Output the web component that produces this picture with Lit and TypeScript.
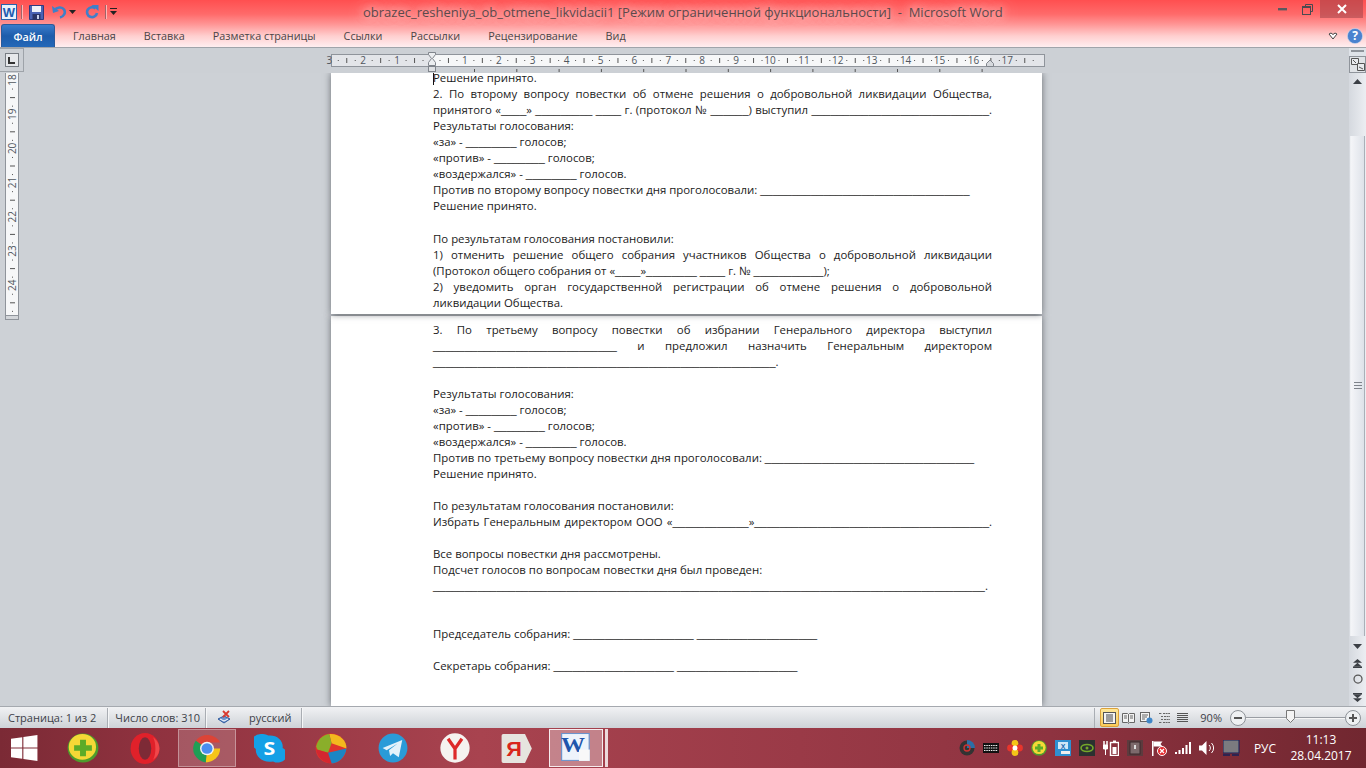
import { LitElement, html, css, svg } from "lit";
import { customElement } from "lit/decorators.js";

const u = (n: number) => "_".repeat(n);
type L = { t: string; j?: boolean };
const page1: L[] = [
  { t: "Решение принято." },
  { t: "2. По второму вопросу повестки об отмене решения о добровольной ликвидации Общества,", j: true },
  { t: `принятого «${u(4)}» ${u(9)} ${u(4)} г. (протокол № ${u(6)}) выступил ${u(28)}.`, j: true },
  { t: "Результаты голосования:" },
  { t: `«за» - ${u(8)} голосов;` },
  { t: `«против» - ${u(8)} голосов;` },
  { t: `«воздержался» - ${u(8)} голосов.` },
  { t: `Против по второму вопросу повестки дня проголосовали: ${u(33)}` },
  { t: "Решение принято." },
  { t: "" },
  { t: "По результатам голосования постановили:" },
  { t: "1) отменить решение общего собрания участников Общества о добровольной ликвидации", j: true },
  { t: `(Протокол общего собрания от «${u(4)}»${u(8)} ${u(4)} г. № ${u(11)});` },
  { t: "2) уведомить орган государственной регистрации об отмене решения о добровольной", j: true },
  { t: "ликвидации Общества." },
];
const page2: L[] = [
  { t: "3. По третьему вопросу повестки об избрании Генерального директора выступил", j: true },
  { t: `${u(29)} и предложил назначить Генеральным директором`, j: true },
  { t: `${u(54)}.` },
  { t: "" },
  { t: "Результаты голосования:" },
  { t: `«за» - ${u(8)} голосов;` },
  { t: `«против» - ${u(8)} голосов;` },
  { t: `«воздержался» - ${u(8)} голосов.` },
  { t: `Против по третьему вопросу повестки дня проголосовали: ${u(33)}` },
  { t: "Решение принято." },
  { t: "" },
  { t: "По результатам голосования постановили:" },
  { t: `Избрать Генеральным директором ООО «${u(12)}»${u(37)}.`, j: true },
  { t: "" },
  { t: "Все вопросы повестки дня рассмотрены." },
  { t: "Подсчет голосов по вопросам повестки дня был проведен:" },
  { t: `${u(87)}.` },
  { t: "" },
  { t: "" },
  { t: `Председатель собрания: ${u(19)} ${u(19)}` },
  { t: "" },
  { t: `Секретарь собрания: ${u(19)} ${u(19)}` },
];

const hRuler = () => {
  const nums: number[] = [];
  for (let k = -3; k <= 17; k++) if (k !== 0) nums.push(k);
  const X = (k: number) => 102 + 33.9 * k;
  const marks: unknown[] = [];
  for (let k = -3; k <= 17; k++) {
    marks.push(svg`<rect x="${X(k + 0.25)}" y="60" width="1" height="1" fill="#555"/>`);
    marks.push(svg`<rect x="${X(k + 0.5)}" y="58" width="1" height="5" fill="#555"/>`);
    marks.push(svg`<rect x="${X(k + 0.75)}" y="60" width="1" height="1" fill="#555"/>`);
  }
  const tabs: number[] = [];
  for (let i = 0; i <= 12; i++) tabs.push(145 + 42.3 * i);
  return html`<svg class="hruler" width="718" height="25" viewBox="0 48 718 25">
    <rect x="2.5" y="54.5" width="713" height="12" fill="#e3e5e9" stroke="#8f949b"/>
    <rect x="104" y="55" width="557" height="11" fill="#f6f7f8"/>
    <g>${marks.filter((_, i) => {
      const k = -3 + Math.floor(i / 3);
      return X(k) + 33.9 < 715 && X(k) > -10;
    })}</g>
    ${nums.map((k) => svg`<text x="${X(k)}" y="64" text-anchor="middle" class="rn">${Math.abs(k)}</text>`)}
    ${tabs.map((x) => svg`<rect x="${x}" y="69" width="1" height="3" fill="#555"/>`)}
    <path d="M99.5 52.5h7v2l-3 4 3 4v3h-7v-3l3-4-3-4z" fill="#eceef0" stroke="#80858c"/>
    <rect x="99.5" y="66.5" width="7" height="5" fill="#dfe1e4" stroke="#80858c"/>
    <path d="M657.5 66.5v-3l3.5-3.5 3.5 3.5v3z" fill="#d6d9dd" stroke="#80858c"/>
  </svg>`;
};

const vRuler = () => {
  const marks: unknown[] = [];
  const nums = [18, 19, 20, 21, 22, 23, 24];
  const Y = (n: number) => 7 + 34.2 * (n - 18);
  for (let n = 17; n <= 24; n++) {
    for (const [f, w] of [[0.25, 1], [0.5, 5], [0.75, 1]] as const) {
      const y = Y(n) + 34.2 * f;
      if (y > 0 && y < 243) marks.push(svg`<rect x="${7 - (w - 1) / 2}" y="${y}" width="${w}" height="1" fill="#555"/>`);
    }
  }
  return html`<svg class="vruler" width="14" height="247" viewBox="0 0 14 247">
    <rect x="0.5" y="-2" width="13" height="245" fill="#f6f7f8" stroke="#8f949b"/>
    <rect x="0.5" y="242.5" width="13" height="4" fill="#d3d6da" stroke="#8f949b"/>
    ${marks}
    ${nums.map((n) => svg`<text transform="translate(10.5 ${Y(n)}) rotate(-90)" text-anchor="middle" class="rn">${n}</text>`)}
  </svg>`;
};

const I = {
  wordSmall: html`<svg width="16" height="16" viewBox="0 0 16 16"><rect x=".5" y=".5" width="15" height="15" fill="#e9f1fb" stroke="#2a62ac"/><text x="8" y="13" text-anchor="middle" class="wt" font-size="13">W</text></svg>`,
  save: html`<svg width="15" height="15" viewBox="0 0 15 15"><path d="M.5.5h14v14H.5z" fill="#4a63b4" stroke="#2c3a80"/><rect x="3" y="1" width="9" height="6" fill="#eef1f8"/><rect x="3.5" y="9" width="8" height="6" fill="#2b3566"/><rect x="8" y="10" width="2" height="4" fill="#c7d0ea"/></svg>`,
  undo: html`<svg width="15" height="14" viewBox="0 0 15 14"><path d="M2 5.500c3-3.500 8-4 10-1 2 3 0 7-4 8" fill="none" stroke="#3f80c8" stroke-width="2.600"/><path d="M0 1l1 7 6-2z" fill="#3f80c8"/></svg>`,
  redo: html`<svg width="14" height="14" viewBox="0 0 14 14"><path d="M10.500 3.500a5 5 0 1 0 1.500 4.500" fill="none" stroke="#3f7fc9" stroke-width="2.600"/><path d="M6.500 0h7v6z" fill="#3f7fc9"/></svg>`,
  down: html`<svg width="7" height="4" viewBox="0 0 7 4"><path d="M0 0h7L3.500 4z" fill="#222"/></svg>`,
  qat: html`<svg width="8" height="8" viewBox="0 0 8 8"><path d="M0 0h7v1H0z" fill="#222"/><path d="M0 3h7L3.500 7z" fill="#222"/></svg>`,
  min: html`<svg width="9" height="4" viewBox="0 0 9 4"><rect width="9" height="2.400" y="1" fill="#5a5a5f"/></svg>`,
  rest: html`<svg width="11" height="11" viewBox="0 0 11 11"><path d="M3.500 2.500v-2h7v7h-2" fill="none" stroke="#4a4a50"/><rect x=".5" y="2.500" width="8" height="8" fill="none" stroke="#4a4a50"/><rect x=".5" y="2.500" width="8" height="1.500" fill="#4a4a50"/></svg>`,
  close: html`<svg width="10" height="10" viewBox="0 0 10 10"><path d="M1 1l8 8M9 1l-8 8" stroke="#fff" stroke-width="2"/></svg>`,
  fold: html`<svg width="10" height="8" viewBox="0 0 10 8"><path d="M1 2l2-1 2 1.500L7 1l2 1-4 5z" fill="#fff" stroke="#444" stroke-width="1"/></svg>`,
  help: html`<svg width="16" height="16" viewBox="0 0 16 16"><circle cx="8" cy="8" r="7.600" fill="#4a82cf" stroke="#cfdcf0" stroke-width=".6"/><text x="8" y="12.400" text-anchor="middle" class="hq">?</text></svg>`,
  tabstop: html`<svg width="7" height="7" viewBox="0 0 7 7"><path d="M0 0h2v5h5v2H0z" fill="#333"/></svg>`,
  viewRuler: html`<svg width="14" height="13" viewBox="0 0 14 13"><path d="M.5.5h7v6h-7z" fill="#e8eaee" stroke="#555"/><path d="M6.500 5.500h7v7h-7z" fill="#e8eaee" stroke="#555"/><path d="M2 2l3 3M8 9l4 2" stroke="#555"/></svg>`,
  up: html`<svg width="9" height="5" viewBox="0 0 9 5"><path d="M0 5h9L4.500 0z" fill="#3b3f45"/></svg>`,
  dn: html`<svg width="9" height="5" viewBox="0 0 9 5"><path d="M0 0h9L4.500 5z" fill="#3b3f45"/></svg>`,
  prev: html`<svg width="9" height="9" viewBox="0 0 7 7"><path d="M3.500 0L7 3H0zM3.500 3L7 6H0z" fill="#3b3f45"/><rect y="6" width="7" height="1" fill="#3b3f45"/></svg>`,
  next: html`<svg width="9" height="9" viewBox="0 0 7 7"><rect width="7" height="1" fill="#3b3f45"/><path d="M0 1h7L3.500 4zM0 4h7L3.500 7z" fill="#3b3f45"/></svg>`,
  browse: html`<svg width="10" height="10" viewBox="0 0 8 8"><circle cx="4" cy="4" r="3.200" fill="none" stroke="#555"/></svg>`,
  spell: html`<svg width="15" height="15" viewBox="0 0 15 15"><path d="M1 9l6-3 6 3-6 4z" fill="#6f93cc" stroke="#2e5a9e"/><path d="M3 9l4 2 4-2" fill="none" stroke="#fff"/><path d="M6 1l6 6M12 1l-6 6" stroke="#d83a30" stroke-width="1.800"/></svg>`,
  vPrint: html`<svg width="13" height="12" viewBox="0 0 13 12"><rect x=".5" y=".5" width="12" height="11" fill="#f4f4f4" stroke="#555"/><path d="M3 3h7M3 5h7M3 7h7M3 9h7" stroke="#444"/></svg>`,
  vRead: html`<svg width="13" height="12" viewBox="0 0 13 12"><path d="M.5 1.500h5l1 1 1-1h5v9h-5l-1 1-1-1h-5z" fill="#f2f2f2" stroke="#666"/><path d="M6.500 2.500v8M2 4h3M2 6h3M8 4h3M8 6h3" stroke="#666"/></svg>`,
  vWeb: html`<svg width="13" height="12" viewBox="0 0 13 12"><rect x=".5" y=".5" width="9" height="9" fill="#f4f4f4" stroke="#666"/><path d="M2 3h6M2 5h5M2 7h3" stroke="#666"/><circle cx="9.500" cy="8.500" r="3" fill="#3f86c8"/></svg>`,
  vOut: html`<svg width="13" height="12" viewBox="0 0 13 12"><path d="M1 1.500h3M5 1.500h7M3 4.500h2M6 4.500h6M3 7.500h2M6 7.500h6M1 10.500h3M5 10.500h7" stroke="#666" stroke-dasharray="2 .6"/></svg>`,
  vDraft: html`<svg width="13" height="12" viewBox="0 0 13 12"><path d="M1 1.500h11M1 3.500h11M1 5.500h11M1 7.500h11M1 9.500h11" stroke="#555"/></svg>`,
  zminus: html`<svg width="16" height="16" viewBox="0 0 16 16"><circle cx="8" cy="8" r="7.500" fill="#eef0f2" stroke="#8d9298"/><rect x="4" y="7" width="8" height="2" fill="#555"/></svg>`,
  zplus: html`<svg width="16" height="16" viewBox="0 0 16 16"><circle cx="8" cy="8" r="7.500" fill="#eef0f2" stroke="#8d9298"/><path d="M4 7h3V4h2v3h3v2H9v3H7V9H4z" fill="#555"/></svg>`,
  thumb: html`<svg width="9" height="13" viewBox="0 0 9 13"><path d="M.5.5h8v8l-4 4-4-4z" fill="#f4f4f4" stroke="#777"/></svg>`,
};

const T = {
  win: html`<svg width="27" height="26" viewBox="0 0 24 24" preserveAspectRatio="none"><path d="M0 3.400l10-1.400v9.500H0zM11 1.800L23.500 0v11.500H11zM0 12.500h10V22L0 20.600zM11 12.500h12.500V24L11 22.200z" fill="#fff"/></svg>`,
  s360: html`<svg width="32" height="30" viewBox="0 0 27 27" preserveAspectRatio="none"><circle cx="13.500" cy="13.500" r="13" fill="#4e9c2c"/><circle cx="13" cy="12.500" r="11.500" fill="#f5d836"/><path d="M11 6h5v5h5v5h-5v5h-5v-5H6v-5h5z" fill="#5cab28"/></svg>`,
  opera: html`<svg width="30" height="31" viewBox="0 0 26 30" preserveAspectRatio="none"><ellipse cx="13" cy="15" rx="12.500" ry="15" fill="#e0212a"/><ellipse cx="13" cy="15" rx="5.400" ry="11" fill="#7d2a36"/><path d="M20 4c3 2.500 5.500 6 5.500 11s-2.500 8.500-5.500 11c1.500-3 2-7 2-11s-.5-8-2-11z" fill="#f0474a"/></svg>`,
  chrome: html`<svg width="30" height="29" viewBox="0 0 24 24" preserveAspectRatio="none"><path d="M12 12L3 5.500A11.500 11.500 0 0 1 22.500 7H12z" fill="#dc4437"/><path d="M12 12h10.500A11.500 11.500 0 0 1 11 23.500z" fill="#f5c518"/><path d="M12 12l-1 11.500A11.500 11.500 0 0 1 3 5.500z" fill="#1f9e55"/><circle cx="12" cy="12" r="5.600" fill="#f2f2f2"/><circle cx="12" cy="12" r="4.400" fill="#4a8ef0"/></svg>`,
  skype: html`<svg width="31" height="31" viewBox="0 0 26 30" preserveAspectRatio="none"><path d="M7 1a7 7 0 0 1 5 1.500c7-1 13 5 12 12a7.500 7.500 0 0 1-8 13c-8 2-15-4-14.500-12A8 8 0 0 1 7 1z" fill="#14a0e6"/><text x="13" y="21.500" text-anchor="middle" class="sk">S</text></svg>`,
  ball: html`<svg width="32" height="31" viewBox="0 0 27 30" preserveAspectRatio="none"><ellipse cx="13.500" cy="15" rx="13" ry="14.500" fill="#e0332d"/><path d="M12 1c8-1 15 6 14.500 14L14 10z" fill="#f3b81e"/><path d="M1 13C2 7 6 2 12 1l2 9-3 9-9-3z" fill="#8aae2a"/><path d="M11 19l15.500-4C26 22 21 29 14 29.500L11 22z" fill="#1b86c4"/><path d="M1 16l10 3 3 10.500C7 29 2 23 1 16z" fill="#d42730"/></svg>`,
  tg: html`<svg width="30" height="30" viewBox="0 0 26 26"><circle cx="13" cy="13" r="12.500" fill="#2a9bd8"/><path d="M4 13L21 6l-3 15-5-3.500-2.500 2.500-1-5L17 9l-9.500 6z" fill="#e4f2fa"/></svg>`,
  yb: html`<svg width="30" height="30" viewBox="0 0 26 26"><circle cx="13" cy="13" r="12.700" fill="#f5f3f0"/><path d="M7 5l6 8.500L19 5M13 13v10" fill="none" stroke="#dd2a2a" stroke-width="2.800"/></svg>`,
  ya: html`<svg width="32" height="31" viewBox="0 0 28 28" preserveAspectRatio="none"><path d="M2 1h19l6 13-6 13H2a1.500 1.500 0 0 1-1.500-1.500v-23A1.500 1.500 0 0 1 2 1z" fill="#e6e4df"/><text x="11.500" y="21" text-anchor="middle" class="yt">Я</text></svg>`,
  word: html`<svg width="30" height="30" viewBox="0 0 25 29" preserveAspectRatio="none"><rect x=".5" y=".5" width="23" height="26" fill="#eef3fb" stroke="#6c93cc"/><text x="10" y="18" text-anchor="middle" class="wb">W</text><path d="M15 16h9v11h-9z" fill="#f8f8f8"/></svg>`,
};

const Tray = {
  a: html`<svg width="16" height="16" viewBox="0 0 16 16"><circle cx="8" cy="8" r="7.500" fill="#333"/><path d="M8 0a8 8 0 0 1 8 8h-8z" fill="#2b6fa8"/><circle cx="8" cy="8" r="3" fill="none" stroke="#c33" stroke-width="1.400"/></svg>`,
  b: html`<svg width="16" height="10" viewBox="0 0 16 10"><rect width="16" height="10" fill="#111"/><path d="M1 2.500h14M1 5h14M1 7.500h14" stroke="#eee" stroke-dasharray="1.500 .8"/></svg>`,
  c: html`<svg width="16" height="16" viewBox="0 0 16 16"><circle cx="8" cy="3.500" r="3.400" fill="#f5c518"/><circle cx="3.500" cy="8" r="3.400" fill="#e8352c"/><circle cx="12.500" cy="8" r="3.400" fill="#e8352c"/><circle cx="8" cy="12.500" r="3.400" fill="#f5c518"/><circle cx="8" cy="8" r="2.500" fill="#fff"/></svg>`,
  d: html`<svg width="16" height="16" viewBox="0 0 16 16"><circle cx="8" cy="8" r="7.800" fill="#4e9c2c"/><circle cx="8" cy="7.500" r="6.600" fill="#f5d836"/><path d="M6.500 4h3v2.500H12v3H9.500V12h-3V9.500H4v-3h2.500z" fill="#5cab28"/></svg>`,
  e: html`<svg width="16" height="16" viewBox="0 0 16 16"><rect width="16" height="16" fill="#2e8fd0"/><rect x="3" y="2" width="10" height="7" fill="#cfe7f7"/><text x="8" y="8.500" text-anchor="middle" class="tx">X</text><rect x="6" y="11" width="9" height="3" fill="#eee"/></svg>`,
  f: html`<svg width="16" height="16" viewBox="0 0 16 16"><rect width="16" height="16" fill="#2b3130"/><ellipse cx="8" cy="8" rx="6" ry="3.500" fill="none" stroke="#74a82a" stroke-width="1.600"/><circle cx="8" cy="8" r="1.500" fill="#74a82a"/></svg>`,
  g: html`<svg width="16" height="16" viewBox="0 0 16 16"><path d="M1 1v4M4 1v4" stroke="#fff" stroke-width="1.500"/><path d="M.5 5h4v4h-4zM2.500 9v6" fill="#fff" stroke="#fff"/><rect x="7.500" y="2.500" width="8" height="13" fill="none" stroke="#fff" stroke-width="1.400"/><rect x="10" y=".5" width="3" height="2" fill="#fff"/><rect x="9.500" y="7" width="4" height="7" fill="#fff"/></svg>`,
  h: html`<svg width="16" height="16" viewBox="0 0 16 16"><rect width="16" height="16" fill="#5c3b3e"/><rect x="3" y="2" width="10" height="12" fill="#7d6a6c" stroke="#3a2a2c"/><rect x="7" y="5" width="2" height="4" fill="#ddd"/></svg>`,
  i: html`<svg width="16" height="16" viewBox="0 0 16 16"><rect x="1" y="1" width="1.500" height="15" fill="#fff"/><path d="M2.500 1.500h9l-2 2.500 2 2.500h-9z" fill="#fff"/><circle cx="11" cy="11" r="4.500" fill="#e2282c" stroke="#fff"/><path d="M9 9l4 4M13 9l-4 4" stroke="#fff" stroke-width="1.300"/></svg>`,
  j: html`<svg width="16" height="12" viewBox="0 0 16 12"><path d="M0 10h2v2H0zM3.500 8h2v4h-2zM7 6h2v6H7zM10.500 3h2v9h-2zM14 0h2v12h-2z" fill="#fff"/></svg>`,
  k: html`<svg width="16" height="14" viewBox="0 0 16 14"><path d="M0 4.500h3L7.500 0v14L3 9.500H0z" fill="#fff"/><path d="M10 4a4 4 0 0 1 0 6M12.500 2a7 7 0 0 1 0 10" fill="none" stroke="#fff"/></svg>`,
  l: html`<svg width="17" height="16" viewBox="0 0 17 16"><rect width="16" height="13" fill="#7b7b7f" stroke="#14205a"/><path d="M0 15h7M9 15h7" stroke="#14205a" stroke-width="1.500"/></svg>`,
};

@customElement("app-root")
export class AppRoot extends LitElement {
  static styles = css`
    :host { display: block; width: 1366px; height: 768px; overflow: hidden; font-family: "Open Sans", "Noto Sans", sans-serif; }
    .app { display: grid; grid-template-rows: 48px 25px 633px 22px 40px; height: 768px; }
    .head { display: grid; grid-template-rows: 24px 23px; border-bottom: 1px solid #a0a4aa;
      background: linear-gradient(180deg, #ff4f50 0, #ff6a6a 14px, #ff9494 24px, #ffcfcf 36px, #ffeef0 47px); }
    .title { display: flex; align-items: center; position: relative; }
    .qat { display: flex; align-items: center; padding-left: 1px; height: 24px; }
    .qat > * { display: block; }
    .sep { width: 1px; height: 14px; background: #a06468; box-shadow: 1px 0 #ffb6b6; }
    .qat .s1 { margin: 0 7px 0 4px; }
    .qat .und { margin-left: 8px; }
    .qat .dr { margin: 0 0 0 2px; }
    .qat .red { margin-left: 9px; }
    .qat .s2 { margin: 0 4px 0 6px; }
    .doc-title { position: absolute; left: 363px; top: 3px; font-size: 13.02px; line-height: 18px; color: #5b4a4c; white-space: pre;
      text-shadow: 0 0 8px #ffd4d4, 0 0 14px #ffc8c8, 0 0 20px #ffc0c0; }
    .win { margin-left: auto; display: flex; align-items: flex-start; height: 24px; padding-right: 3px; }
    .win span { display: flex; align-items: center; justify-content: center; height: 18px; }
    .win .m { width: 26px; }
    .win .r { width: 24px; margin-right: 1px; }
    .win .c { width: 43px; background: rgba(160, 70, 75, 0.55); }
    .tabs { display: flex; align-items: stretch; font-size: 10.8px; color: #4a4446; padding-left: 1px; }
    .tab { padding: 0 14px; line-height: 24px; }
    .file { width: 54px; padding: 0; margin-right: 4px; text-align: center; color: #fff; font-weight: 600; border-radius: 3px 3px 0 0; line-height: 23px;
      background: linear-gradient(180deg, #3a7ccb, #1d5cab 50%, #2468b8); border: 1px solid #2a5a9a; border-bottom: 0; box-sizing: border-box; }
    .rbr { margin-left: auto; display: flex; align-items: center; gap: 9px; padding-right: 3px; }
    .rbar { background: #ccd0d5; display: flex; position: relative; z-index: 1; }
    .tabbtn { width: 24px; height: 24px; box-sizing: border-box; border: 1px solid #9ea3a9; border-left: 0; display: flex; align-items: center; justify-content: center; margin-top: 0; }
    .tabbtn i { width: 14px; height: 14px; box-sizing: border-box; background: #e6e8eb; border: 1px solid #777c83; display: flex; align-items: center; justify-content: center; }
    .hruler { margin-left: 305px; display: block; flex: none; overflow: visible; }
    .rn { font: 10px "Open Sans", sans-serif; fill: #50565e; }
    .vr { margin-left: auto; width: 17px; display: flex; flex-direction: column; align-items: center; background: #dfe3e9; }
    .vr .bar { width: 13px; height: 2px; background: #8f949b; margin-top: 2px; }
    .vr .btn { width: 17px; height: 17px; box-sizing: border-box; margin-top: 4px; border: 1px solid #8f949b; background: #e0e3e7; display: flex; align-items: center; justify-content: center; }
    .main { display: grid; grid-template-columns: 24px 1fr 17px; background: #cdd1d6; }
    .vcol { padding-left: 5px; }
    .vruler { display: block; }
    .page { margin-left: 307px; width: 711px; background: #fff; box-shadow: 0 0 7px rgba(70, 74, 80, 0.75); box-sizing: border-box; padding: 0 50px 0 102px; }
    .p1 { height: 241px; position: relative; }
    .p2 { margin-top: 2px; height: 390px; padding-top: 6.1px; }
    .line { height: 16.05px; line-height: 16px; font-family: "Open Sans", sans-serif; font-size: 11.42px; color: #1b1b1b; white-space: pre; position: relative; z-index: 2; }
    .p2 .line { height: 16.02px; }
    .p1 .line:first-child { height: 13.15px; line-height: 10px; }
    .line i { font-family: "Liberation Sans", sans-serif; font-style: normal; }
    .j { text-align: justify; text-align-last: justify; white-space: normal; }
    .caret { position: absolute; left: 102px; top: 0; width: 1px; height: 12px; background: #111; }
    .sb { background: linear-gradient(90deg, #d5d9df, #eceef2); display: flex; flex-direction: column; align-items: center; }
    .sb .ic { height: 16px; display: flex; align-items: center; justify-content: center; flex: none; }
    .thumb { width: 15px; margin-top: 47px; height: 500px; box-sizing: border-box; flex: none; background: linear-gradient(90deg, #f4f5f8, #dee2e9); border-right: 1px solid #aab0b8; border-left: 1px solid #eef0f3; display: flex; flex-direction: column; justify-content: center; align-items: center; gap: 1px; }
    .thumb b { display: block; width: 8px; height: 1px; background: #7e838a; margin-bottom: 1px; }
    .sb .after { margin-top: 2px; }
    .sb .b1 { margin-top: 1px; }
    .sb .b3 { margin-top: 2px; }
    .status { background: linear-gradient(180deg, #f1f2f4, #ced2d7); border-top: 1px solid #a5a9af; box-sizing: border-box; display: flex; align-items: center; font-size: 11px; color: #3d4148; height: 22px; position: relative; z-index: 1; }
    .cell { height: 20px; display: flex; align-items: center; border-right: 1px solid #a9adb3; box-shadow: 1px 0 #f5f6f7; white-space: nowrap; }
    .c1 { padding: 0 11px 0 8px; }
    .c2 { padding: 0 5px 0 7px; }
    .c3 { gap: 17px; padding: 0 9px 0 11px; }
    .sright { margin-left: auto; display: flex; align-items: center; height: 20px; }
    .views { display: flex; align-items: center; gap: 1px; padding: 0 0 0 5px; border-left: 1px solid #a9adb3; height: 20px; }
    .v { width: 17px; height: 17px; display: flex; align-items: center; justify-content: center; }
    .v.on { background: linear-gradient(180deg, #fde79a, #fbcc5a); border: 1px solid #dca23a; box-sizing: border-box; border-radius: 2px; width: 19px; height: 19px; }
    .pct { margin: 0 8px 0 9px; }
    .zoom { display: flex; align-items: center; padding-right: 5px; }
    .slider { width: 99px; height: 1px; background: #999da3; position: relative; box-shadow: 0 1px #f5f5f5; }
    .slider span { position: absolute; left: 40px; top: -7px; display: block; line-height: 0; }
    .task { background: linear-gradient(90deg, #7b2a35 0, #8f323f 150px, #a8434f 480px, #9a3a47 800px, #8e3340 1050px, #712730 1366px); display: flex; align-items: center; height: 40px; }
    .app-i { width: 62px; height: 40px; display: flex; align-items: center; justify-content: center; box-sizing: border-box; flex: none; }
    .start { width: 52px; padding-right: 4px; }
    .chrome { height: 38px; background: rgba(255,255,255,.18); border: 1px solid rgba(255,255,255,.35); width: 58px; margin: 0 2px; }
    .wordbtn { height: 38px; width: 54px; background: rgba(255,255,255,.35); border: 1px solid rgba(255,255,255,.85); margin-left: 1px; }
    .sliver { width: 3px; height: 38px; margin-left: 2px; background: rgba(255,255,255,.8); }
    .tray { margin-left: auto; display: flex; align-items: center; color: #fff; }
    .tr { width: 24px; display: flex; align-items: center; justify-content: center; height: 40px; }
    .lng { font-size: 12px; width: 44px; text-align: center; }
    .clock { width: 79px; text-align: center; font-size: 12px; line-height: 16px; padding-right: 11px; box-sizing: border-box; }
    .wt { font: bold 13px "Liberation Sans", sans-serif; fill: #1f5bb0; }
    .wb { font: bold 20px "Liberation Serif", serif; fill: #1f56ac; }
    .hq { font: bold 12px "Open Sans", sans-serif; fill: #fff; }
    .sk { font: bold 18px "Open Sans", sans-serif; fill: #fff; }
    .yt { font: bold 19px "Liberation Sans", sans-serif; fill: #d9261c; }
    .tx { font: bold 7px "Liberation Sans", sans-serif; fill: #1a6ab0; }
    svg { display: block; }
  `;

  private line(l: L) {
    const parts = l.t ? l.t.split(/(_+)/) : [" "];
    return html`<div class="line ${l.j ? "j" : ""}">${parts.map((p) => (p.startsWith("_") ? html`<i>${p}</i>` : p))}</div>`;
  }

  render() {
    return html`<div class="app">
      <header class="head">
        <div class="title">
          <div class="qat">
            ${I.wordSmall}<span class="sep s1"></span>${I.save}<span class="und">${I.undo}</span><span class="dr">${I.down}</span><span class="red">${I.redo}</span><span class="sep s2"></span>${I.qat}
          </div>
          <div class="doc-title">obrazec_resheniya_ob_otmene_likvidacii1 [Режим ограниченной функциональности]  -  Microsoft Word</div>
          <div class="win"><span class="m">${I.min}</span><span class="r">${I.rest}</span><span class="c">${I.close}</span></div>
        </div>
        <nav class="tabs">
          <div class="tab file">Файл</div>
          ${["Главная", "Вставка", "Разметка страницы", "Ссылки", "Рассылки", "Рецензирование", "Вид"].map((t) => html`<div class="tab">${t}</div>`)}
          <div class="rbr">${I.fold}${I.help}</div>
        </nav>
      </header>
      <div class="rbar">
        <div class="tabbtn"><i>${I.tabstop}</i></div>
        ${hRuler()}
        <div class="vr"><div class="bar"></div><div class="btn">${I.viewRuler}</div></div>
      </div>
      <main class="main">
        <div class="vcol">${vRuler()}</div>
        <div class="docs">
          <section class="page p1"><span class="caret"></span><div class="lines">${page1.map((l) => this.line(l))}</div></section>
          <section class="page p2">${page2.map((l) => this.line(l))}</section>
        </div>
        <aside class="sb">
          <div class="ic">${I.up}</div>
          <div class="thumb"><b></b><b></b><b></b></div>
          <div class="ic after">${I.dn}</div>
          <div class="ic b1">${I.prev}</div>
          <div class="ic">${I.browse}</div>
          <div class="ic b3">${I.next}</div>
        </aside>
      </main>
      <footer class="status">
        <div class="cell c1">Страница: 1 из 2</div>
        <div class="cell c2">Число слов: 310</div>
        <div class="cell c3">${I.spell}<span>русский</span></div>
        <div class="sright">
          <div class="views">
            <span class="v on">${I.vPrint}</span><span class="v">${I.vRead}</span><span class="v">${I.vWeb}</span><span class="v">${I.vOut}</span><span class="v">${I.vDraft}</span>
          </div>
          <span class="pct">90%</span>
          <div class="zoom">${I.zminus}<div class="slider"><span>${I.thumb}</span></div>${I.zplus}</div>
        </div>
      </footer>
      <div class="task">
        <div class="app-i start">${T.win}</div>
        <div class="app-i">${T.s360}</div>
        <div class="app-i">${T.opera}</div>
        <div class="app-i chrome">${T.chrome}</div>
        <div class="app-i">${T.skype}</div>
        <div class="app-i">${T.ball}</div>
        <div class="app-i">${T.tg}</div>
        <div class="app-i">${T.yb}</div>
        <div class="app-i">${T.ya}</div>
        <div class="app-i wordbtn">${T.word}</div>
        <div class="sliver"></div>
        <div class="tray">
          ${Object.values(Tray).map((t) => html`<div class="tr">${t}</div>`)}
          <div class="lng">РУС</div>
          <div class="clock">11:13<br />28.04.2017</div>
        </div>
      </div>
    </div>`;
  }
}
